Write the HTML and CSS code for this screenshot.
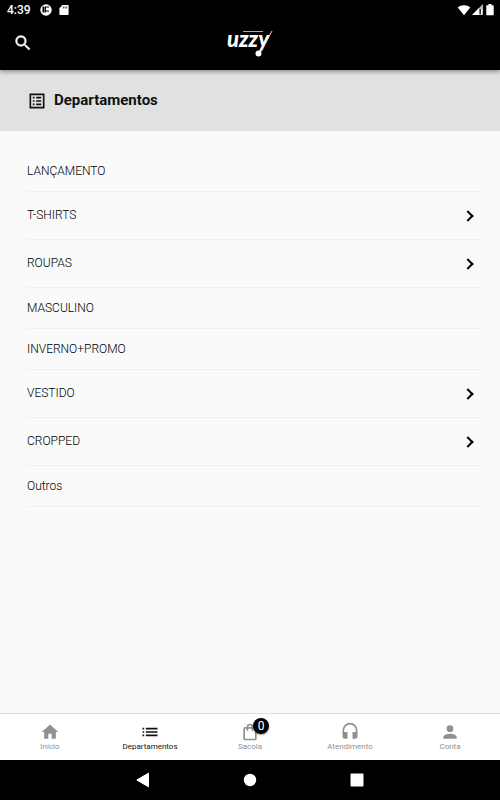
FILE: index.html
```html
<!DOCTYPE html>
<html lang="pt-BR">
<head>
<meta charset="utf-8">
<meta name="viewport" content="width=device-width, initial-scale=1">
<title>Departamentos</title>
<link rel="stylesheet" href="styles.css">
</head>
<body>
<header class="top">
  <div class="status">
    <span class="clock">4:39</span>
    <svg class="status-icon" width="12" height="12" viewBox="0 0 12 12"><circle cx="6" cy="6" r="5.700" fill="#fff"/><path d="M2.500 2.500h2v6h-2zM5 2.500h1v6H5zM6 2.500h3v1H6zM6 6.500h3v1H6z" fill="#000"/></svg>
    <svg class="status-icon" width="10" height="12" viewBox="0 0 10 12"><path d="M3.500 1H9l.6.6v8.800L9 11H1l-.6-.6V4.200z" fill="#fff"/><path d="M4 2.500h.7v2H4zM5.700 2.500h.7v2h-.7zM7.400 2.500h.7v2h-.7z" fill="#000"/></svg>
    <span class="spacer"></span>
    <svg class="status-icon" width="14" height="12" viewBox="0 0 14 12"><path d="M.7 3.600C4.300.6 9.700.6 13.300 3.600L7 11.200z" fill="#fff"/></svg>
    <svg class="status-icon" width="12" height="12" viewBox="0 0 12 12"><path d="M0 11L11 0v11z" fill="#bbb"/><path d="M0 11L7 4v7zM9 5h1v5H9z" fill="#fff"/><path d="M7.500 5H9v5H7.500z" fill="#333"/></svg>
    <svg class="status-icon" width="10" height="12" viewBox="0 0 10 12"><path d="M3.500 0h3v1.200h1.700l.5.500v9l-.5.500H1.800l-.5-.5v-9l.5-.5h1.700z" fill="#fff"/></svg>
  </div>
  <div class="appbar">
    <button class="search" type="button" aria-label="Buscar"><svg width="20" height="20" viewBox="0 0 24 24"><path fill="#fff" stroke="#fff" stroke-width=".5" d="M15.500 14h-.79l-.28-.27A6.470 6.470 0 0 0 16 9.500 6.500 6.500 0 1 0 9.500 16c1.610 0 3.090-.59 4.230-1.570l.27.28v.79l5 4.990L20.490 19zm-6 0a4.500 4.500 0 1 1 0-9 4.500 4.500 0 0 1 0 9z"/></svg></button>
    <svg class="logo" width="48" height="32" viewBox="0 0 48 32" role="img" aria-label="uzzy">
      <text class="wordmark" x="1" y="20">uzzy</text>
      <path d="M17 4.500h20" stroke="#aaa" stroke-width="1"/>
      <path d="M46 4L34 26" stroke="#ddd" stroke-width="1"/>
      <circle cx="32.500" cy="26.500" r="3" fill="#fff"/>
    </svg>
  </div>
</header>
<div class="heading">
  <svg width="20" height="20" viewBox="0 0 24 24"><path fill="#111" d="M3 3h18v18H3zM5 5v14h14V5zM7 7h2v2H7zM11 7h6v2h-6zM7 11h2v2H7zM11 11h6v2h-6zM7 15h2v2H7zM11 15h6v2h-6z" fill-rule="evenodd"/></svg>
  <h1>Departamentos</h1>
</div>
<main>
  <ul class="list">
    <li><a href="#">LANÇAMENTO</a></li>
    <li><a class="more" href="#">T-SHIRTS</a></li>
    <li><a class="more" href="#">ROUPAS</a></li>
    <li><a href="#">MASCULINO</a></li>
    <li><a href="#">INVERNO+PROMO</a></li>
    <li><a class="more" href="#">VESTIDO</a></li>
    <li><a class="more" href="#">CROPPED</a></li>
    <li><a href="#">Outros</a></li>
  </ul>
</main>
<nav class="tabs">
  <a href="#"><svg width="20" height="20" viewBox="0 0 24 24"><path d="M10 20v-6h4v6h5v-8h3L12 3 2 12h3v8z"/></svg>Início</a>
  <a class="active" href="#"><svg width="20" height="20" viewBox="0 0 24 24"><path d="M3 13h2v-2H3zm0 4h2v-2H3zm0-8h2V7H3zm4 4h14v-2H7zm0 4h14v-2H7zM7 7v2h14V7z"/></svg>Departamentos</a>
  <a href="#"><span class="bag"><svg width="20" height="20" viewBox="0 0 24 24"><path fill-rule="evenodd" d="M18 6h-2a4 4 0 0 0-8 0H6a2 2 0 0 0-2 2v12a2 2 0 0 0 2 2h12a2 2 0 0 0 2-2V8a2 2 0 0 0-2-2zm-6-2a2 2 0 0 1 2 2h-4a2 2 0 0 1 2-2zm6 16H6V8h2v2a1 1 0 0 0 2 0V8h4v2a1 1 0 0 0 2 0V8h2z"/></svg><span class="badge">0</span></span>Sacola</a>
  <a href="#"><svg width="20" height="20" viewBox="0 0 24 24"><path d="M12 1a9 9 0 0 0-9 9v7a3 3 0 0 0 3 3h3v-8H5v-2a7 7 0 0 1 14 0v2h-4v8h3a3 3 0 0 0 3-3v-7a9 9 0 0 0-9-9z"/></svg>Atendimento</a>
  <a href="#"><svg width="20" height="20" viewBox="0 0 24 24"><path d="M12 12a4 4 0 1 0 0-8 4 4 0 0 0 0 8zm0 2c-2.670 0-8 1.340-8 4v2h16v-2c0-2.660-5.330-4-8-4z"/></svg>Conta</a>
</nav>
<footer class="system">
  <button type="button" aria-label="Voltar"><svg width="14" height="16" viewBox="0 0 14 16"><path d="M12.500 1.200v13.600L.8 8z" fill="#fff" stroke="#fff" stroke-linejoin="round"/></svg></button>
  <button type="button" aria-label="Início"><svg width="14" height="16" viewBox="0 0 14 16"><circle cx="7" cy="8" r="6.200" fill="#fff"/></svg></button>
  <button type="button" aria-label="Recentes"><svg width="14" height="16" viewBox="0 0 14 16"><rect x=".5" y="1.500" width="13" height="13" rx="1" fill="#fff"/></svg></button>
</footer>
</body>
</html>
```
FILE: styles.css
```css
*,
*::after {
  box-sizing: border-box;
}

body {
  margin: 0;
  min-height: 100vh;
  display: flex;
  flex-direction: column;
  background: #fafafa;
  color: #111;
  font-family: Roboto, "Liberation Sans", sans-serif;
}

svg {
  display: block;
}

a {
  color: inherit;
  text-decoration: none;
}

button {
  padding: 0;
  border: 0;
  background: none;
}

.top {
  position: relative;
  background: #000;
  color: #fff;
  box-shadow: 0 2px 4px rgba(0, 0, 0, 0.35);
}

.status {
  display: flex;
  align-items: center;
  height: 20px;
  padding: 0 4px 0 7px;
}

.clock {
  margin-right: 9px;
  font-size: 12px;
  font-weight: 500;
}

.status-icon {
  margin-right: 7px;
}

.spacer ~ .status-icon {
  margin-right: 1px;
}

.spacer {
  flex: 1;
}

.appbar {
  display: grid;
  grid-template-columns: 1fr auto 1fr;
  align-items: center;
  height: 50px;
  padding: 0 13px 4px;
}

.search {
  justify-self: start;
}

.logo {
  overflow: visible;
}

.wordmark {
  fill: #fff;
  font-family: Lato, sans-serif;
  font-size: 22px;
  font-weight: 900;
  font-style: italic;
}

.heading {
  display: flex;
  align-items: center;
  gap: 7px;
  padding: 20px 27px;
  background: #e0e2e1;
}

.heading h1 {
  margin: 0;
  font-size: 15px;
  font-weight: 700;
  line-height: 21px;
}

main {
  flex: 1;
  padding: 20px 20px 20px 27px;
}

.list {
  margin: 0;
  padding: 0;
  list-style: none;
  color: #000;
  font-size: 12px;
  font-weight: 300;
  line-height: 15px;
}

.list li {
  border-bottom: 1px solid #f0f0f0;
}

.list a {
  display: flex;
  align-items: center;
  justify-content: space-between;
  padding: 13px 0 12px;
}

.list .more {
  padding: 16px 8px 16px 0;
}

.more::after {
  content: "";
  width: 8px;
  height: 8px;
  border: solid #000;
  border-width: 2px 2px 0 0;
  transform: rotate(45deg);
}

.tabs {
  display: grid;
  grid-template-columns: repeat(5, 1fr);
  border-top: 1px solid #ddd;
  background: #fff;
  color: #909090;
  font-size: 8px;
  line-height: 10px;
}

.tabs a {
  display: flex;
  flex-direction: column;
  align-items: center;
  padding: 8px 0;
}

.tabs svg {
  fill: currentColor;
}

.tabs .active {
  color: #111;
}

.bag {
  position: relative;
}

.badge {
  position: absolute;
  top: -4px;
  left: 13px;
  width: 16px;
  height: 16px;
  border-radius: 50%;
  background: #000;
  color: #fff;
  font-size: 12px;
  line-height: 16px;
  text-align: center;
  box-shadow: 0 1px 2px rgba(0, 0, 0, 0.4);
}

.system {
  display: flex;
  align-items: center;
  justify-content: center;
  gap: 93px;
  height: 40px;
  background: #000;
}
```
